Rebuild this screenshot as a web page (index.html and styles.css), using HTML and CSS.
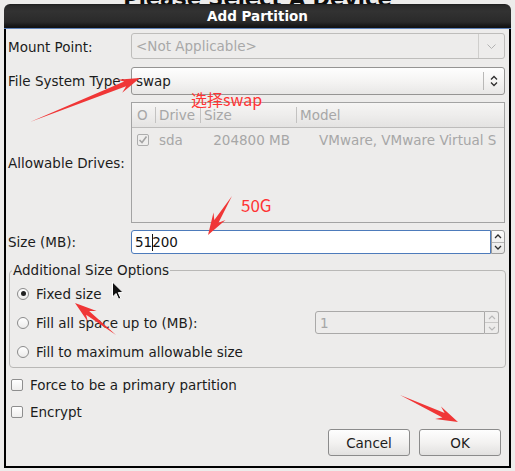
FILE: index.html
```html
<!DOCTYPE html>
<html>
<head>
<meta charset="utf-8">
<title>Add Partition</title>
<link rel="stylesheet" href="styles.css">
</head>
<body>
<div class="backdrop-title">Please Select A Device</div>
<div class="window">
  <div class="titlebar">Add Partition</div>
  <div class="content">
    <div class="form">
      <div class="lbl">Mount Point:</div>
      <div class="combo combo-entry disabled">
        <span class="combo-text">&lt;Not Applicable&gt;</span>
        <span class="combo-btn"><svg width="9" height="5" viewBox="0 0 9 5"><path d="M0.5 0.5 L4.5 4.5 L8.5 0.5" stroke="#b2b2b2" stroke-width="1" fill="none"/></svg></span>
      </div>

      <div class="lbl">File System Type:</div>
      <div class="combo combo-button">
        <span class="combo-text">swap</span>
        <span class="combo-btn"><svg width="8" height="12" viewBox="0 0 8 12"><path d="M1 4.5 L4 1.5 L7 4.5 M1 7.5 L4 10.5 L7 7.5" stroke="#2e2e2e" stroke-width="1.3" fill="none"/></svg></span>
      </div>

      <div class="lbl">Allowable Drives:</div>
      <div class="treeview">
        <div class="tv-row tv-head">
          <span class="c c-check">O</span><i class="sep"></i>
          <span class="c">Drive</span><i class="sep"></i>
          <span class="c">Size</span><i class="sep"></i>
          <span class="c">Model</span>
        </div>
        <div class="tv-row tv-item">
          <span class="c c-check"><span class="box box-disabled"><svg width="10" height="10" viewBox="0 0 10 10"><path d="M1.5 5 L4 7.5 L8.5 1.5" stroke="#a4a4a4" stroke-width="1.6" fill="none"/></svg></span></span><i></i>
          <span class="c">sda</span><i></i>
          <span class="c c-size">204800 MB</span><i></i>
          <span class="c c-model">VMware, VMware Virtual S</span>
        </div>
      </div>

      <div class="lbl">Size (MB):</div>
      <div class="spin spin-focus">
        <div class="spin-entry">51<span class="caret"></span>200</div>
        <div class="spin-btns">
          <span><svg width="8" height="5" viewBox="0 0 8 5"><path d="M1 4 L4 1 L7 4" stroke="#2e2e2e" stroke-width="1.3" fill="none"/></svg></span>
          <span><svg width="8" height="5" viewBox="0 0 8 5"><path d="M1 1 L4 4 L7 1" stroke="#2e2e2e" stroke-width="1.3" fill="none"/></svg></span>
        </div>
      </div>
    </div>

    <fieldset class="frame">
      <legend>Additional Size Options</legend>
      <div class="opt"><span class="radio checked"></span>Fixed size</div>
      <div class="opt"><span class="radio"></span>Fill all space up to (MB):
        <div class="spin spin-disabled">
          <div class="spin-entry">1</div>
          <div class="spin-btns">
            <span><svg width="8" height="5" viewBox="0 0 8 5"><path d="M1 4 L4 1 L7 4" stroke="#b8b8b8" stroke-width="1.2" fill="none"/></svg></span>
            <span><svg width="8" height="5" viewBox="0 0 8 5"><path d="M1 1 L4 4 L7 1" stroke="#b8b8b8" stroke-width="1.2" fill="none"/></svg></span>
          </div>
        </div>
      </div>
      <div class="opt"><span class="radio"></span>Fill to maximum allowable size</div>
    </fieldset>

    <div class="checks">
      <div class="chk"><span class="box"></span>Force to be a primary partition</div>
      <div class="chk"><span class="box"></span>Encrypt</div>
    </div>

    <div class="buttons">
      <button class="btn">Cancel</button>
      <button class="btn">OK</button>
    </div>
  </div>
</div>

<svg class="annotations" width="515" height="471" viewBox="0 0 515 471">
  <g fill="#f03636">
    <polygon points="30,122 126.1,86.3 122.2,92.7 140,78 117.0,79.7 124.2,81.6"/>
    <polygon points="232,196 218.5,222.7 225.5,220.0 208,235 213.5,212.6 214.3,220.1"/>
    <polygon points="116,335 86.1,314.8 88.0,322.0 75,303 96.6,311.0 89.1,310.9"/>
    <polygon points="400,395 444.6,413.0 441.0,406.4 458,422 435.1,419.0 442.4,417.5"/>
  </g>
  <text class="note" x="191" y="106">选择swap</text>
  <text class="note note-big" x="241" y="211.5">50G</text>
  <polygon class="cursor" points="112.5,282 112.5,297 116,293.5 118.6,299.2 120.8,298.2 118.3,292.6 123.2,292.6"/>
</svg>
</body>
</html>
```

FILE: styles.css
```css
* {
  box-sizing: border-box;
}

html, body {
  margin: 0;
  padding: 0;
}

body {
  width: 515px;
  height: 471px;
  overflow: hidden;
  position: relative;
  background: #edeceb;
  font-family: "DejaVu Sans", "Noto Sans CJK SC", sans-serif;
  font-size: 13.5px;
  color: #1c1c1c;
}

.backdrop-title {
  position: absolute;
  top: -11px;
  left: 0;
  width: 515px;
  text-align: center;
  font: bold 21px/21px "DejaVu Sans", sans-serif;
  color: #0e0e0e;
}

.window {
  position: relative;
  z-index: 1;
  margin: 4px 0 0 4px;
  width: 507px;
  height: 464px;
  display: flex;
  flex-direction: column;
}

.titlebar {
  height: 25px;
  border-radius: 6px 6px 0 0;
  background: linear-gradient(#1e1e1e 0, #2b2b2b 8%, #323232 30%, #2a2a2a 75%, #161616 92%, #121212 100%);
  border-bottom: 1px solid #5f82b8;
  color: #fff;
  font-weight: bold;
  text-align: center;
  line-height: 25px;
}

.content {
  flex: 1;
  display: flex;
  flex-direction: column;
  border: 2px solid #000;
  border-top: none;
  min-height: 0;
}

.form {
  display: grid;
  grid-template-columns: 125px 374px;
  grid-template-rows: 27px 28px 121px 24px;
  row-gap: 7px;
  margin-top: 4px;
}

.lbl {
  padding-left: 2px;
  align-self: center;
  white-space: nowrap;
}

.combo {
  display: flex;
  align-self: start;
  border-radius: 3px;
}

.combo-text {
  flex: 1;
  display: flex;
  align-items: center;
  padding-left: 4px;
}

.combo-btn {
  display: flex;
  align-items: center;
  justify-content: center;
}

.combo-entry {
  height: 26px;
  border: 1px solid #bebdbb;
  background: #edeceb;
}

.combo-entry .combo-text {
  color: #a8a8a8;
}

.combo-entry .combo-btn {
  width: 26px;
  border-left: 1px solid #cfcecc;
}

.combo-button {
  height: 28px;
  border: 1px solid #959493;
  background: linear-gradient(#fefefe, #f4f3f2 55%, #e8e7e6);
}

.combo-button .combo-btn {
  width: 21px;
  margin: 4px 0;
  border-left: 1px solid #b9b8b7;
}

.treeview {
  border: 1px solid #a3a3a3;
  background: #edeceb;
}

.tv-row {
  display: grid;
  grid-template-columns: 23px 1px 44px 1px 95px 1px 1fr;
  color: #a7a7a7;
  white-space: nowrap;
}

.tv-head {
  height: 25px;
  border-bottom: 1px solid #bdbcbb;
  background: linear-gradient(#f6f5f4, #eeedec 50%, #e4e3e2);
}

.tv-head .sep {
  margin: 4px 0;
  background: #c3c2c1;
}

.tv-item {
  height: 23px;
}

.c {
  display: flex;
  align-items: center;
  padding-left: 3px;
  overflow: hidden;
}

.c-check {
  padding-left: 5px;
}

.c-size {
  justify-content: flex-end;
  padding-right: 6px;
}

.c-model {
  padding-left: 22px;
}

.box {
  width: 12px;
  height: 12px;
  border: 1px solid #8e8e8e;
  border-radius: 2px;
  background: linear-gradient(#ffffff, #efeeed);
  display: inline-flex;
  align-items: center;
  justify-content: center;
  flex: none;
}

.box-disabled {
  border-color: #adadad;
  background: #efeeed;
}

.spin {
  display: flex;
  height: 24px;
}

.spin-entry {
  flex: 1;
  display: flex;
  align-items: center;
  padding-left: 3px;
  border-radius: 3px 0 0 3px;
}

.spin-focus .spin-entry {
  background: #fff;
  border: 1px solid #4d7bbb;
  color: #111;
}

.caret {
  display: inline-block;
  width: 1px;
  height: 17px;
  background: #111;
  margin-right: -1px;
}

.spin-btns {
  width: 14px;
  display: flex;
  flex-direction: column;
  border: 1px solid #9c9c9c;
  border-radius: 0 3px 3px 0;
  background: linear-gradient(#fcfcfc, #e8e7e6);
}

.spin-btns span {
  flex: 1;
  display: flex;
  align-items: center;
  justify-content: center;
}

.spin-btns span + span {
  border-top: 1px solid #b5b5b5;
}

.spin-disabled {
  width: 184px;
  height: 23px;
  margin-left: auto;
}

.spin-disabled .spin-entry {
  border: 1px solid #aaa9a8;
  background: #edeceb;
  color: #a6a6a6;
  padding-left: 4px;
}

.spin-disabled .spin-btns {
  border-color: #b0afae;
  border-left: none;
  background: #edeceb;
}

.spin-disabled .spin-btns span + span {
  border-top-color: #c9c8c7;
}

.frame {
  margin: 8px 3px 0;
  padding: 1px 6px 1px 0;
  border: 1px solid #b9b8b6;
  border-radius: 4px;
  min-width: 0;
}

.frame legend {
  margin-left: 2px;
  padding: 0 1px;
  line-height: 16px;
}

.opt {
  display: flex;
  align-items: center;
  height: 29px;
  padding-left: 7px;
  white-space: nowrap;
}

.radio {
  width: 12px;
  height: 12px;
  border-radius: 50%;
  border: 1px solid #8b8b8b;
  background: linear-gradient(#ffffff, #ecebea);
  margin-right: 7px;
  display: inline-flex;
  align-items: center;
  justify-content: center;
  flex: none;
}

.radio.checked::before {
  content: "";
  width: 5px;
  height: 5px;
  border-radius: 50%;
  background: #222;
}

.checks {
  margin-top: 3px;
}

.chk {
  display: flex;
  align-items: center;
  height: 27px;
  padding-left: 5px;
}

.chk .box {
  margin-right: 7px;
}

.buttons {
  margin-top: auto;
  display: flex;
  justify-content: flex-end;
  gap: 9px;
  padding: 0 8px 10px 0;
}

.btn {
  width: 82px;
  height: 27px;
  border: 1px solid #8b8b8b;
  border-radius: 3px;
  background: linear-gradient(#fefefe, #f3f2f1 50%, #e2e1e0);
  font-family: "DejaVu Sans", sans-serif;
  font-size: 13.5px;
  color: #1c1c1c;
  padding: 0;
}

.annotations {
  position: absolute;
  top: 0;
  left: 0;
  z-index: 2;
  pointer-events: none;
}

.note {
  font-family: "Noto Sans CJK SC", sans-serif;
  font-size: 16px;
  fill: #ff3333;
}

.note-big {
  font-size: 17px;
}

.cursor {
  fill: #111;
  stroke: #fff;
  stroke-width: 1;
  stroke-linejoin: round;
}
```
